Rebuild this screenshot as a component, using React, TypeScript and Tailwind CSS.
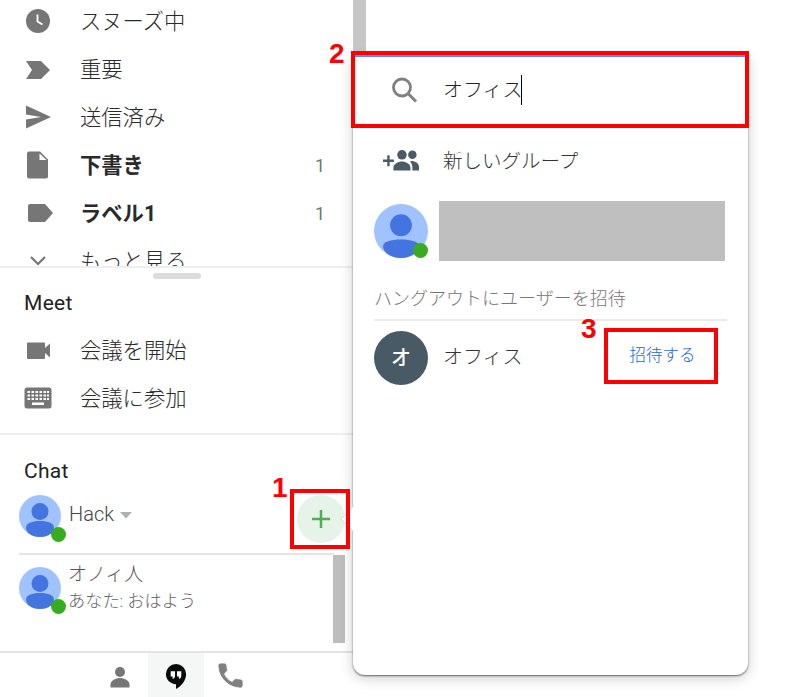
import React from "react";

const font = "font-['Roboto','Noto_Sans_CJK_JP',sans-serif]";

function Avatar({ size, dotAt }: { size: number; dotAt: number }) {
  const s = size / 42;
  return (
    <svg width={size} height={size} viewBox={`0 0 ${size} ${size}`} className="shrink-0 overflow-visible">
      <circle cx={size / 2} cy={size / 2} r={size / 2} fill="#a0c3ff" />
      <circle cx={21 * s} cy={16.500 * s} r={8.500 * s} fill="#4374e0" />
      <path d={`M${7 * s} ${33 * s}c0-5 ${6 * s}-7 ${14 * s}-7s${14 * s} 2 ${14 * s} 7c0 3-${4 * s} ${9 * s}-${14 * s} ${9 * s}s-${14 * s}-${6 * s}-${14 * s}-${9 * s}z`} fill="#4374e0" />
      <circle cx={dotAt} cy={dotAt} r="7.500" fill="#37ac1e" />
    </svg>
  );
}

const Clock = () => (
  <svg width="26" height="26" viewBox="0 0 26 26"><circle cx="13" cy="13" r="12" fill="#767676" /><path d="M12.500 6.500v7l5 3" fill="none" stroke="#fff" strokeWidth="1.800" /></svg>
);
const Important = () => (
  <svg width="26" height="26" viewBox="0 0 26 26"><path d="M1 5h15l9 9-9 9H1l6-9z" fill="#767676" /></svg>
);
const Send = () => (
  <svg width="26" height="26" viewBox="0 0 26 26"><path d="M1 1.500l25 11.500L1 24.500v-9l15-2.500-15-2.500z" fill="#767676" /></svg>
);
const Draft = () => (
  <svg width="26" height="28" viewBox="0 0 26 28"><path d="M4 0.500h11l8 8v17a2 2 0 0 1-2 2H4a2 2 0 0 1-2-2V2.500a2 2 0 0 1 2-2z" fill="#767676" /><path d="M14.500 2.500v6.500h7z" fill="#fff" /></svg>
);
const Label = () => (
  <svg width="26" height="20" viewBox="0 0 26 20" className="overflow-visible"><path d="M5 1h15l8 9-8 9H5a2 2 0 0 1-2-2V3a2 2 0 0 1 2-2z" fill="#767676" /></svg>
);
const Chevron = () => (
  <svg width="26" height="26" viewBox="0 0 26 26"><path d="M6 9l7 7 7-7" fill="none" stroke="#767676" strokeWidth="2.200" /></svg>
);
const Video = () => (
  <svg width="26" height="26" viewBox="0 0 26 26"><path d="M2 6.500a1 1 0 0 1 1-1h16a1 1 0 0 1 1 1V11l5-4.500v14L20 16v5a1 1 0 0 1-1 1H3a1 1 0 0 1-1-1z" fill="#767676" /></svg>
);
const Keyboard = () => (
  <svg width="28" height="22" viewBox="0 0 28 22" className="shrink-0">
    <rect x="0.500" y="0.500" width="27" height="21" rx="2.500" fill="#767676" />
    <path d="M3.500 5h2.500M7.500 5H10M11.500 5H14M15.500 5H18M19.500 5H22M23 5h2M3.500 8.500h2.500M7.500 8.500H10M11.500 8.500H14M15.500 8.500H18M19.500 8.500H22M23 8.500h2M3.500 12h2.500M7.500 12H10M11.500 12H14M15.500 12H18M19.500 12H22M23 12h2" stroke="#fff" strokeWidth="2.200" />
    <rect x="8" y="15.500" width="12" height="2.500" fill="#fff" />
  </svg>
);

function NavRow({ icon, label, bold, count }: { icon: React.ReactNode; label: string; bold?: boolean; count?: string }) {
  return (
    <div className="flex items-center pl-[25px] pr-[28px] h-12 shrink-0">
      <div className="w-[26px] flex justify-center shrink-0">{icon}</div>
      <span className={`ml-[29px] pt-[2px] flex-1 text-[21.300px] leading-none whitespace-nowrap text-[#2a2a2a] ${bold ? "font-bold" : "font-light"}`}>{label}</span>
      {count && <span className="text-[18px] text-[#767676]">{count}</span>}
    </div>
  );
}

const sectionTitle = "pl-[24px] pt-[2px] h-[28px] flex items-center text-[21px] tracking-[0.3px] text-[#222]";
const redBox = "absolute border-[4px] border-[#ff0000]";
const redNum = "absolute text-[28px] leading-[30px] font-bold text-[#ff0000] font-['Liberation_Sans',sans-serif]";

export default function App() {
  return (
    <div className={`${font} relative w-[792px] h-[697px] overflow-hidden bg-white flex`}>
      {/* Sidebar */}
      <div className="w-[353px] h-[697px] flex flex-col shrink-0">
        <div className="h-[268px] overflow-hidden shrink-0 border-b-2 border-[#efefef]">
          <div className="-mt-[3px]">
            <NavRow icon={<Clock />} label="スヌーズ中" />
            <NavRow icon={<Important />} label="重要" />
            <NavRow icon={<Send />} label="送信済み" />
            <NavRow icon={<Draft />} label="下書き" bold count="1" />
            <NavRow icon={<Label />} label="ラベル1" bold count="1" />
            <NavRow icon={<Chevron />} label="もっと見る" />
          </div>
        </div>
        <div className="h-[167px] shrink-0 border-b-2 border-[#efefef] flex flex-col">
          <div className="flex justify-center pt-[5px]">
            <div className="w-[48px] h-[6px] rounded-full bg-[#dcdcdc]" />
          </div>
          <div className={`${sectionTitle} mt-[10px]`}>Meet</div>
          <div className="mt-[9px] flex flex-col">
            <NavRow icon={<Video />} label="会議を開始" />
            <NavRow icon={<Keyboard />} label="会議に参加" />
          </div>
        </div>
        <div className="flex-1 flex flex-col min-h-0">
          <div className={`${sectionTitle} mt-[22px]`}>Chat</div>
          <div className="mt-[10px] mx-[19px] h-[60px] shrink-0 border-b-2 border-[#e4e4e4] flex items-start">
            <Avatar size={42} dotAt={39.500} />
            <span className="ml-[8px] mt-[4px] text-[20px] leading-[30px] font-light text-[#444]">Hack</span>
            <svg width="12" height="7" viewBox="0 0 12 7" className="ml-[6px] mt-[17px]"><path d="M0 0h12L6 6.500z" fill="#b0b0b0" /></svg>
          </div>
          <div className="ml-[19px] mr-[8px] h-[96px] shrink-0 flex justify-between">
            <div className="flex items-start pt-[12px]">
              <Avatar size={42} dotAt={39.500} />
              <div className="ml-[7px] -mt-[5px] flex flex-col">
                <span className="text-[19px] leading-[26px] font-light text-[#555]">オノィ人</span>
                <span className="text-[17.200px] leading-[26px] font-light text-[#666] whitespace-nowrap">あなた: おはよう</span>
              </div>
            </div>
            <div className="w-[12px] h-[88px] bg-[#bdbdbd]" />
          </div>
          <div className="h-[46px] shrink-0 border-t-2 border-[#e4e4e4] flex justify-center pr-[1px]">
            <div className="w-[56px] flex items-center justify-center pt-[3px]">
              <svg width="20" height="22" viewBox="0 0 20 22"><circle cx="10" cy="6" r="5" fill="#767676" /><path d="M0.500 21.500v-3c0-4 5.500-6.500 9.500-6.500s9.500 2.500 9.500 6.500v3z" fill="#767676" /></svg>
            </div>
            <div className="w-[56px] flex items-center justify-center bg-[#f5f6f6] pt-[2px]">
              <svg width="22" height="25" viewBox="0 0 22 26"><path d="M11 0a10.500 10.500 0 0 0-10.500 10.500C.5 16.300 5.200 21 11 21v5c6-3 10.500-9 10.500-15.500A10.500 10.500 0 0 0 11 0z" fill="#0a0a0a" /><path d="M5.500 7.500h4.500v4.500c0 2-1 3.500-2.500 3.500V13h-2zM12 7.500h4.500V12c0 2-1 3.500-2.500 3.500V13h-2z" fill="#fff" /></svg>
            </div>
            <div className="w-[56px] flex items-center justify-center pt-[1px] pr-[3px]">
              <svg width="31" height="31" viewBox="0 0 24 24"><path d="M6.620 10.790c1.440 2.830 3.760 5.140 6.590 6.590l2.200-2.200c.27-.27.67-.36 1.020-.24 1.120.37 2.330.57 3.570.57.55 0 1 .45 1 1V20c0 .55-.45 1-1 1-9.390 0-17-7.610-17-17 0-.55.45-1 1-1h3.500c.55 0 1 .45 1 1 0 1.250.2 2.450.57 3.570.11.35.03.74-.25 1.020l-2.200 2.200z" fill="#808080" stroke="#808080" strokeWidth="0.700" strokeLinejoin="round" /></svg>
            </div>
          </div>
        </div>
      </div>
      {/* Page scrollbar remnant above the panel */}
      <div className="w-[13px] h-[56px] bg-[#c6c6c6] shrink-0" />

      {/* Overlay panel */}
      <div className="absolute left-[353px] top-[55px] w-[395px] h-[620px] bg-white rounded-b-[12px] rounded-t-[4px] border-t-2 border-[#4d90fe] shadow-[0_1px_2px_rgba(0,0,0,0.55),0_3px_14px_rgba(0,0,0,0.2)] flex flex-col">
        <div className="h-[66px] flex items-center shrink-0 pl-[37px]">
          <svg width="28" height="28" viewBox="0 0 28 28"><circle cx="12" cy="11.500" r="8.500" fill="none" stroke="#808080" strokeWidth="2.800" /><path d="M18 17.500l8 8" stroke="#808080" strokeWidth="3" /></svg>
          <span className="ml-[25px] text-[20px] font-light text-[#222] leading-none">オフィス</span>
          <span className="w-px h-[30px] bg-black -ml-[2px]" />
        </div>
        <div className="h-[74px] flex items-center shrink-0 pl-[30px]">
          <svg width="36" height="21" viewBox="0 0 38 22">
            <path d="M0 10h4.500V5.500h2.500V10h4.500v2.500H7V17H4.500v-4.500H0z" fill="#4a5a66" />
            <circle cx="20" cy="5" r="5" fill="#4a5a66" /><circle cx="31" cy="5" r="4.500" fill="#4a5a66" />
            <path d="M11 21.500v-3c0-4 5-6.500 9-6.500s9 2.500 9 6.500v3zM30 11.500c4 0 8 2.500 8 6v4h-7v-3c0-3-1-5-2.500-6.500z" fill="#4a5a66" />
          </svg>
          <span className="ml-[24px] pt-[3px] text-[19.500px] font-light text-[#333] leading-none whitespace-nowrap">新しいグループ</span>
        </div>
        <div className="flex items-center pl-[21px] shrink-0 h-[68px]">
          <Avatar size={54} dotAt={46.500} />
          <div className="ml-[11px] w-[286px] h-[60px] bg-[#bfbfbf] shrink-0" />
        </div>
        <div className="mx-[21px] pt-[17px] h-[56px] border-b-2 border-[#ebebeb] shrink-0 text-[18px] font-light text-[#777] leading-[34px] whitespace-nowrap">ハングアウトにユーザーを招待</div>
        <div className="flex items-center pl-[21px] h-[74px] shrink-0">
          <div className="w-[54px] h-[54px] rounded-full bg-[#485a65] flex items-center justify-center text-white text-[20px] font-medium shrink-0">オ</div>
          <span className="ml-[15px] -mt-[3px] text-[20px] font-light text-[#333] leading-none whitespace-nowrap">オフィス</span>
          <span className="ml-[107px] -mt-[3px] text-[16.500px] text-[#1967d2] font-light leading-none whitespace-nowrap">招待する</span>
        </div>
      </div>

      {/* Add button */}
      <div className="absolute left-[297px] top-[495px] w-[48px] h-[48px] rounded-full bg-[#e6f3e9] flex items-center justify-center">
        <svg width="20" height="20" viewBox="0 0 20 20"><path d="M10 1v18M1 10h18" stroke="#4caf50" strokeWidth="2.500" /></svg>
      </div>
      {/* Panel's pointer toward the button */}
      <svg width="16" height="28" viewBox="0 0 16 28" className="absolute left-[340px] top-[505px]">
        <path d="M14 0L1 14l13 14z" fill="#fff" />
        <path d="M14 1L1 14l13 13" fill="none" stroke="#d8d8d8" />
      </svg>

      {/* Annotation boxes */}
      <div className={`${redBox} left-[351px] top-[51px] w-[398px] h-[77px]`} />
      <div className={`${redBox} left-[290px] top-[489px] w-[60px] h-[60px]`} />
      <div className={`${redBox} left-[604px] top-[328px] w-[114px] h-[56px]`} />
      <span className={`${redNum} left-[329px] top-[39px]`}>2</span>
      <span className={`${redNum} left-[272px] top-[473px]`}>1</span>
      <span className={`${redNum} left-[581px] top-[314px]`}>3</span>
    </div>
  );
}
